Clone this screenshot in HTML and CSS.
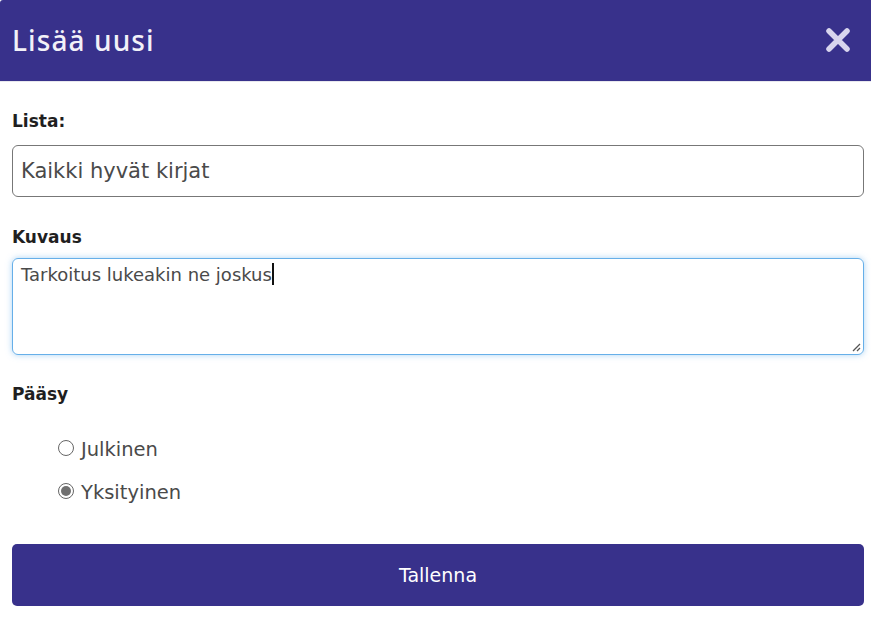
FILE: index.html
```html
<!DOCTYPE html>
<html lang="fi">
<head>
<meta charset="utf-8">
<title>Lisää uusi</title>
<link rel="stylesheet" href="styles.css">
</head>
<body>
<div class="modal">
  <header class="modal-header">
    <h1 class="modal-title">Lisää uusi</h1>
    <button class="close" aria-label="Sulje">
      <svg width="26" height="26" viewBox="0 0 26 26"><path d="M4 4 L22 22 M22 4 L4 22" stroke="#d8d5ee" stroke-width="5.5" stroke-linecap="round"/></svg>
    </button>
  </header>
  <form class="modal-body">
    <label class="label" for="lista">Lista:</label>
    <input id="lista" class="input" type="text" value="Kaikki hyvät kirjat">
    <label class="label label-kuvaus" for="kuvaus">Kuvaus</label>
    <div class="textarea focused" id="kuvaus"><span>Tarkoitus lukeakin ne joskus</span><span class="caret"></span><svg class="grip" width="10" height="10" viewBox="0 0 10 10"><path d="M9 2 L2 9 M9 6 L6 9" stroke="#555" stroke-width="1.3"/></svg></div>
    <div class="label label-paasy">Pääsy</div>
    <div class="radios">
      <label class="radio"><span class="dot"></span>Julkinen</label>
      <label class="radio"><span class="dot checked"></span>Yksityinen</label>
    </div>
    <button type="button" class="save">Tallenna</button>
  </form>
</div>
</body>
</html>
```
FILE: styles.css
```css
* { box-sizing: border-box; }
html, body { margin: 0; padding: 0; background: #fff; }
body { font-family: "DejaVu Sans", "Open Sans", sans-serif; color: #222; }
.modal { width: 871px; background: #fff; border-top-left-radius: 3px; overflow: hidden; }
.modal-header {
  height: 82px; background: #38318b; display: flex; align-items: center;
  justify-content: space-between; padding: 0 20px 0 12px;
  border-bottom: 1px solid #e8e8ee;
}
.modal-title { margin: 0; font-family: "Noto Sans", sans-serif; font-weight: 500; font-size: 28px; color: #f2f1f8; letter-spacing: 1.1px; padding-bottom: 2px; }
.close { background: none; border: 0; padding: 0; width: 26px; height: 26px; display: flex; margin-bottom: 2px; }
.modal-body { padding: 27px 7px 0 12px; display: flex; flex-direction: column; }
.label { font-weight: 700; font-size: 17px; color: #1f1f1f; line-height: 24px; }
.input {
  margin-top: 12px; height: 52px; border: 1px solid #777; border-radius: 6px;
  padding: 0 8px; font-family: inherit; font-size: 21px; color: #4a4a4a; font-weight: 400;
  outline: none; width: 100%;
}
.label-kuvaus { margin-top: 28px; }
.textarea {
  margin-top: 9px; height: 97px; border: 1px solid #66afe9; border-radius: 6px;
  box-shadow: 0 0 6px rgba(102,175,233,0.55); padding: 3px 8px; font-size: 18px;
  color: #4a4a4a; font-weight: 400; position: relative; line-height: 26px;
}
.caret { display: inline-block; width: 2px; height: 22px; background: #111; vertical-align: -4px; }
.grip { position: absolute; right: 2px; bottom: 2px; }
.label-paasy { margin-top: 27px; }
.radios { display: flex; flex-direction: column; gap: 19px; padding-left: 46px; margin-top: 32px; }
.radio { display: flex; align-items: center; gap: 7px; font-size: 19.5px; font-weight: 400; color: #4a4a4a; line-height: 24px; }
.dot { width: 16px; height: 16px; border: 1.5px solid #666; border-radius: 50%; display: inline-block; position: relative; margin-top: -4px; }
.dot.checked::after { content: ""; position: absolute; inset: 2px; border-radius: 50%; background: #707070; }
.save {
  margin-top: 39px; height: 62px; border: 0; border-radius: 5px; background: #38318b;
  color: #fff; font-family: inherit; font-size: 19px; font-weight: 400; width: 100%;
}
```
